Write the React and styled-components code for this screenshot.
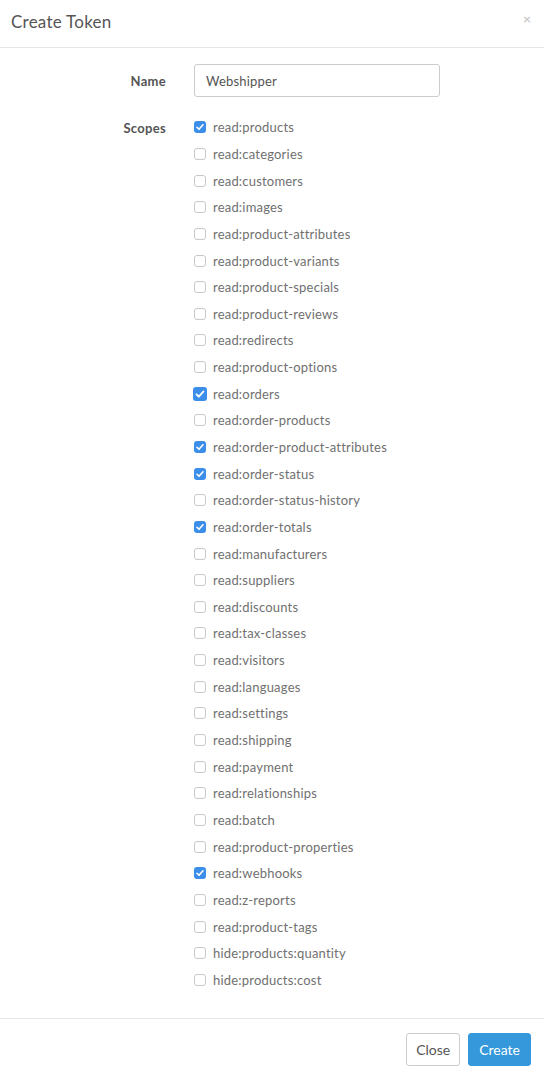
import React, { useState } from 'react'
import styled, { createGlobalStyle } from 'styled-components'

const GlobalStyle = createGlobalStyle`
  html, body {
    margin: 0;
    padding: 0;
    background: #fff;
  }
  body {
    font-family: 'Lato', 'Open Sans', sans-serif;
    -webkit-font-smoothing: antialiased;
  }
`

const scopes = [
  ['read:products', true],
  ['read:categories', false],
  ['read:customers', false],
  ['read:images', false],
  ['read:product-attributes', false],
  ['read:product-variants', false],
  ['read:product-specials', false],
  ['read:product-reviews', false],
  ['read:redirects', false],
  ['read:product-options', false],
  ['read:orders', true, true],
  ['read:order-products', false],
  ['read:order-product-attributes', true],
  ['read:order-status', true],
  ['read:order-status-history', false],
  ['read:order-totals', true],
  ['read:manufacturers', false],
  ['read:suppliers', false],
  ['read:discounts', false],
  ['read:tax-classes', false],
  ['read:visitors', false],
  ['read:languages', false],
  ['read:settings', false],
  ['read:shipping', false],
  ['read:payment', false],
  ['read:relationships', false],
  ['read:batch', false],
  ['read:product-properties', false],
  ['read:webhooks', true],
  ['read:z-reports', false],
  ['read:product-tags', false],
  ['hide:products:quantity', false],
  ['hide:products:cost', false],
]

const App = () => {
  const [name, setName] = useState('Webshipper')
  const [checked, setChecked] = useState(scopes.map(s => s[1]))

  const toggle = (i) => {
    setChecked(checked.map((c, j) => (j === i ? !c : c)))
  }

  return (
    <Modal>
      <GlobalStyle />
      <Header>
        <Title>Create Token</Title>
        <CloseX>×</CloseX>
      </Header>
      <Body>
        <FormRow>
          <Label>Name</Label>
          <Input value={name} onChange={(e) => setName(e.target.value)} />
        </FormRow>
        <FormRow $top>
          <Label $scopes>Scopes</Label>
          <ScopeList>
            {scopes.map(([scope, , focus], i) => (
              <ScopeRow key={scope} onClick={() => toggle(i)}>
                <Box $checked={checked[i]} $big={focus}>
                  {checked[i] && (
                    <svg viewBox="0 0 12 12" width="100%" height="100%">
                      <path d="M3 6.3 L5 8.3 L9 3.8" fill="none" stroke="#fff" strokeWidth="1.6" strokeLinecap="round" strokeLinejoin="round" />
                    </svg>
                  )}
                </Box>
                <ScopeText>{scope}</ScopeText>
              </ScopeRow>
            ))}
          </ScopeList>
        </FormRow>
      </Body>
      <Footer>
        <Button>Close</Button>
        <Button $primary>Create</Button>
      </Footer>
    </Modal>
  )
}

export default App

const Modal = styled.div`
  width: 544px;
  height: 1079px;
  display: flex;
  flex-direction: column;
  background: #fff;
  color: #666;
`

const Header = styled.div`
  height: 48px;
  border-bottom: 1px solid #e5e5e5;
  display: flex;
  align-items: center;
  justify-content: space-between;
  padding: 0 11px;
  box-sizing: border-box;
`

const Title = styled.h4`
  margin: 0;
  font-size: 17px;
  font-weight: 400;
  letter-spacing: 0.25px;
  color: #555;
  margin-top: -4px;
`

const CloseX = styled.span`
  font-size: 14px;
  font-weight: 700;
  color: #ccc;
  margin-top: -10px;
  margin-right: 2px;
`

const Body = styled.div`
  flex: 1;
  padding-top: 16px;
`

const FormRow = styled.div`
  display: grid;
  grid-template-columns: 166px 246px;
  column-gap: 28px;
  align-items: ${p => (p.$top ? 'start' : 'center')};
  margin-bottom: ${p => (p.$top ? '0' : '17px')};
`

const Label = styled.label`
  text-align: right;
  font-size: 13px;
  font-weight: 700;
  letter-spacing: 0.3px;
  color: #555;
  padding-top: ${p => (p.$scopes ? '6px' : '0')};
`

const Input = styled.input`
  height: 33px;
  box-sizing: border-box;
  border: 1px solid #ccc;
  border-radius: 3px;
  padding: 0 11px;
  font-family: inherit;
  font-size: 13px;
  letter-spacing: 0.2px;
  color: #555;
  outline: none;
`

const ScopeList = styled.div`
  display: flex;
  flex-direction: column;
  width: 300px;
`

const ScopeRow = styled.div`
  height: 26.65px;
  display: flex;
  align-items: center;
  cursor: pointer;
`

const Box = styled.span`
  box-sizing: border-box;
  width: ${p => (p.$big ? '14px' : '12px')};
  height: ${p => (p.$big ? '14px' : '12px')};
  margin-left: ${p => (p.$big ? '-1px' : '0')};
  margin-right: ${p => (p.$big ? '6px' : '7px')};
  border-radius: 3px;
  border: ${p => (p.$checked ? 'none' : '1px solid #c8c8c8')};
  background: ${p => (p.$checked ? '#3b8eea' : '#fff')};
  display: flex;
  flex-shrink: 0;
`

const ScopeText = styled.span`
  font-size: 13px;
  letter-spacing: 0.2px;
  color: #707070;
`

const Footer = styled.div`
  border-top: 1px solid #e5e5e5;
  display: flex;
  justify-content: flex-end;
  gap: 8px;
  padding: 14px 13px 13px;
`

const Button = styled.button`
  height: 33px;
  padding: 0 ${p => (p.$primary ? '10px' : '9px')};
  border-radius: 3px;
  font-family: inherit;
  font-size: 14px;
  border: 1px solid ${p => (p.$primary ? '#3498db' : '#ccc')};
  background: ${p => (p.$primary ? '#3498db' : '#fff')};
  color: ${p => (p.$primary ? '#fff' : '#555')};
  cursor: pointer;
`
